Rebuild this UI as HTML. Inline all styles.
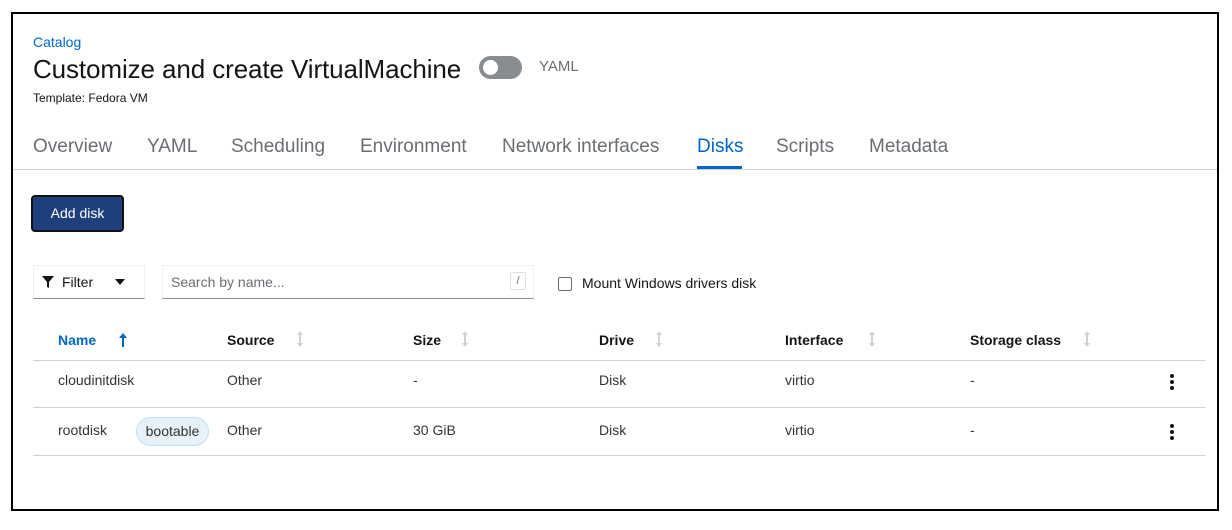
<!DOCTYPE html>
<html><head><style>
*{box-sizing:border-box;margin:0;padding:0}
body{width:1232px;height:530px;background:#fff;font-family:"Liberation Sans",sans-serif;position:relative;overflow:hidden;color:#151515}
.frame{position:absolute;left:11px;top:12px;width:1208px;height:499px;border:2px solid #000}
.a{position:absolute;white-space:nowrap}
.tab{position:absolute;top:136px;font-size:19px;color:#6a6e73}
.th{position:absolute;top:332px;font-size:14px;font-weight:bold;color:#151515}
.td{position:absolute;font-size:14px;color:#333}
.hr{position:absolute;left:33px;width:1172px;height:1px;background:#d2d2d2}
.sort{position:absolute;top:331px;width:6px;height:16px}
.keb{position:absolute;width:4px}
.keb i{display:block;width:4px;height:4px;border-radius:2px;background:#151515;margin-bottom:2px}
</style></head><body>
<div class="frame"></div>
<div class="a" style="left:33px;top:34px;font-size:14px;color:#0066cc">Catalog</div>
<div class="a" style="left:33px;top:54px;font-size:26px;color:#151515;letter-spacing:-0.1px">Customize and create VirtualMachine</div>
<div class="a" style="left:479px;top:56px;width:43px;height:23px;border-radius:12px;background:#8a8d90"></div>
<div class="a" style="left:483px;top:60px;width:15px;height:15px;border-radius:8px;background:#fff"></div>
<div class="a" style="left:539px;top:58px;font-size:15px;color:#6a6e73">YAML</div>
<div class="a" style="left:33px;top:91px;font-size:12px;color:#151515">Template: Fedora VM</div>
<div class="tab" style="left:33px">Overview</div>
<div class="tab" style="left:147px">YAML</div>
<div class="tab" style="left:231px">Scheduling</div>
<div class="tab" style="left:360px">Environment</div>
<div class="tab" style="left:502px">Network interfaces</div>
<div class="tab" style="left:697px;color:#0066cc">Disks</div>
<div class="tab" style="left:776px">Scripts</div>
<div class="tab" style="left:869px">Metadata</div>
<div class="a" style="left:697px;top:166px;width:45px;height:3px;background:#0066cc"></div>
<div class="a" style="left:13px;top:169px;width:1204px;height:1px;background:#d2d2d2"></div>
<div class="a" style="left:31px;top:195px;width:93px;height:37px;background:#1f3f7c;border:2px solid #111;border-radius:4px;color:#fff;font-size:14px;text-align:center;line-height:33px">Add disk</div>
<div class="a" style="left:33px;top:265px;width:112px;height:34px;border:1px solid #f0f0f0;border-bottom:1px solid #8a8d90"></div>
<svg class="a" style="left:42px;top:276px" width="12" height="12" viewBox="0 0 12 12"><path d="M0 0H12L7 6V12L5 11V6Z" fill="#151515"/></svg>
<div class="a" style="left:62px;top:274px;font-size:14px;color:#151515">Filter</div>
<svg class="a" style="left:115px;top:279px" width="10" height="6"><path d="M0 0H10L5 6Z" fill="#151515"/></svg>
<div class="a" style="left:162px;top:265px;width:372px;height:34px;border:1px solid #f0f0f0;border-bottom:1px solid #8a8d90"></div>
<div class="a" style="left:171px;top:274px;font-size:14px;color:#6a6e73">Search by name...</div>
<div class="a" style="left:510px;top:272px;width:16px;height:18px;border:1px solid #e0e0e0;border-radius:2px;font-size:11px;color:#6a6e73;text-align:center;line-height:16px">/</div>
<div class="a" style="left:558px;top:277px;width:14px;height:14px;border:1px solid #6a6e73;border-radius:2px"></div>
<div class="a" style="left:582px;top:275px;font-size:14px;color:#151515">Mount Windows drivers disk</div>
<div class="th" style="left:58px;color:#0066cc">Name</div>
<svg class="a" style="left:119px;top:333px" width="8" height="14" viewBox="0 0 8 14"><path d="M4 0L8 5H5V14H3V5H0Z" fill="#0066cc"/></svg>
<div class="th" style="left:227px">Source</div>
<div class="th" style="left:413px">Size</div>
<div class="th" style="left:599px">Drive</div>
<div class="th" style="left:785px">Interface</div>
<div class="th" style="left:970px">Storage class</div>
<svg class="sort" style="left:297px" viewBox="0 0 6 16"><path d="M3 0L6 4H4V12H6L3 16L0 12H2V4H0Z" fill="#d2d2d2"/></svg>
<svg class="sort" style="left:462px" viewBox="0 0 6 16"><path d="M3 0L6 4H4V12H6L3 16L0 12H2V4H0Z" fill="#d2d2d2"/></svg>
<svg class="sort" style="left:656px" viewBox="0 0 6 16"><path d="M3 0L6 4H4V12H6L3 16L0 12H2V4H0Z" fill="#d2d2d2"/></svg>
<svg class="sort" style="left:869px" viewBox="0 0 6 16"><path d="M3 0L6 4H4V12H6L3 16L0 12H2V4H0Z" fill="#d2d2d2"/></svg>
<svg class="sort" style="left:1084px" viewBox="0 0 6 16"><path d="M3 0L6 4H4V12H6L3 16L0 12H2V4H0Z" fill="#d2d2d2"/></svg>
<div class="hr" style="top:360px"></div>
<div class="td" style="left:58px;top:372px">cloudinitdisk</div>
<div class="td" style="left:227px;top:372px">Other</div>
<div class="td" style="left:413px;top:372px">-</div>
<div class="td" style="left:599px;top:372px">Disk</div>
<div class="td" style="left:785px;top:372px">virtio</div>
<div class="td" style="left:970px;top:372px">-</div>
<div class="keb" style="left:1170px;top:374px"><i></i><i></i><i></i></div>
<div class="hr" style="top:407px"></div>
<div class="td" style="left:58px;top:422px">rootdisk</div>
<div class="a" style="left:136px;top:417px;width:73px;height:29px;border:1px solid #bee1f4;background:#e7f1fa;border-radius:15px;font-size:14px;color:#333;text-align:center;line-height:27px">bootable</div>
<div class="td" style="left:227px;top:422px">Other</div>
<div class="td" style="left:413px;top:422px">30 GiB</div>
<div class="td" style="left:599px;top:422px">Disk</div>
<div class="td" style="left:785px;top:422px">virtio</div>
<div class="td" style="left:970px;top:422px">-</div>
<div class="keb" style="left:1170px;top:424px"><i></i><i></i><i></i></div>
<div class="hr" style="top:455px"></div>
</body></html>
